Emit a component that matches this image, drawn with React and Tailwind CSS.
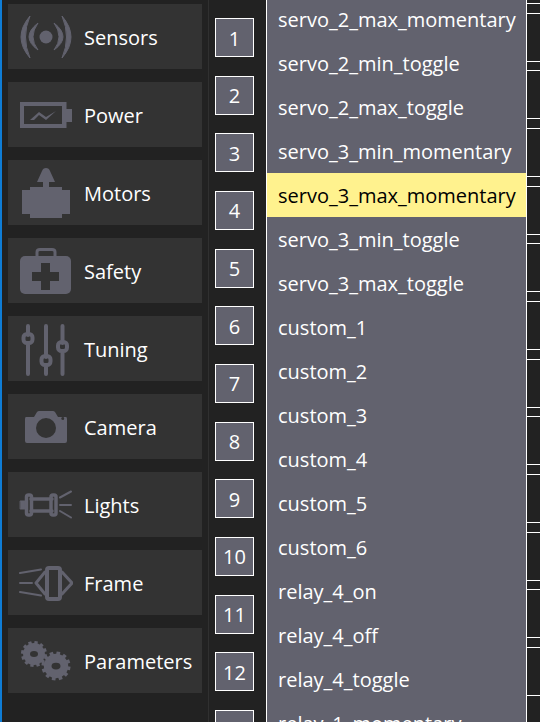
const iconFill = '#62626e';

const SensorsIcon = () => (
  <svg width="54" height="48" viewBox="0 0 54 48" fill={iconFill} stroke={iconFill} strokeLinejoin="round">
    <circle cx="27" cy="24" r="6.5" stroke="none" />
    <path d="M11 3Q-7 24 11 45Q2 24 11 3Z" />
    <path d="M43 3Q61 24 43 45Q52 24 43 3Z" />
    <path d="M19 10Q1 24 19 37Q9 24 19 10Z" />
    <path d="M35 10Q53 24 35 37Q45 24 35 10Z" />
  </svg>
);

const PowerIcon = () => (
  <svg width="54" height="48" viewBox="0 0 54 48" fill="none">
    <path d="M1 11H47.5V18H53V31H47.5V37H1Z" fill={iconFill} />
    <rect x="5" y="15" width="38" height="18" fill="#333333" />
    <path d="M11 29L20 21L27 26L37 20L27 29L20 24L15 29Z" fill={iconFill} />
  </svg>
);

const MotorsIcon = () => (
  <svg width="48" height="50" viewBox="0 0 48 50">
    <path d="M24 0Q21 0 20 3L15 14H21V19H8V22H0V46H8V50H40V46H48V22H40V19H27V14H33L28 3Q27 0 24 0Z" fill={iconFill} />
  </svg>
);

const SafetyIcon = () => (
  <svg width="54" height="50" viewBox="0 0 54 50">
    <path d="M18 12V6Q18 3.500 21 3.500H33Q36 3.500 36 6V12" fill="none" stroke={iconFill} strokeWidth="3" />
    <rect x="1" y="10" width="51" height="38" rx="5" fill={iconFill} />
    <path d="M22 17H31V26H40V35H31V44H22V35H13V26H22Z" fill="#333333" />
  </svg>
);

const TuningIcon = () => (
  <svg width="50" height="56" viewBox="0 0 50 56" fill="none" stroke={iconFill}>
    <path d="M7 5V14M7 24V53M25 5V36M25 46V53M41.500 5V22M41.500 32V53" strokeWidth="4" strokeLinecap="round" />
    <rect x="2.500" y="13" width="9" height="9" rx="3.500" strokeWidth="4" />
    <rect x="20.500" y="35" width="9" height="9" rx="3.500" strokeWidth="4" />
    <rect x="37" y="21" width="9" height="9" rx="3.500" strokeWidth="4" />
  </svg>
);

const CameraIcon = () => (
  <svg width="44" height="34" viewBox="0 0 44 34">
    <path fillRule="evenodd" d="M2 7H10L13 2Q14 1 15 1H29Q30 1 31 2L34 7H42Q43 7 43 9V31Q43 33 41 33H3Q1 33 1 31V9Q1 7 2 7ZM22 8A10 10 0 1 0 22.010 28A10 10 0 1 0 22 8ZM38.700 7A1.500 1.500 0 1 0 38.710 10A1.500 1.500 0 1 0 38.700 7Z" fill={iconFill} />
  </svg>
);

const LightsIcon = () => (
  <svg width="54" height="30" viewBox="0 0 54 30" fill="none" stroke={iconFill} strokeLinecap="round">
    <path d="M1.500 11H6V19H1.500Z" fill={iconFill} strokeWidth="1" />
    <rect x="7.500" y="5" width="5" height="20" rx="2" strokeWidth="3.500" />
    <rect x="32" y="5" width="5" height="20" rx="2" strokeWidth="3.500" />
    <path d="M12 9H33M12 21H33" strokeWidth="3.500" />
    <path d="M41 7.500L52 1.500M41 15H52M41 21L52 27.500" strokeWidth="2" />
  </svg>
);

const FrameIcon = () => (
  <svg width="54" height="36" viewBox="0 0 54 36" fill="none" stroke={iconFill} strokeLinecap="round" strokeLinejoin="round">
    <rect x="28" y="3" width="13" height="31" rx="2" strokeWidth="4" />
    <path d="M26 7L17 18L26 29M43 7L53 18L43 29" strokeWidth="3" />
    <path d="M1 8L22 4.500M1 18H13M1 27L22 30.500" strokeWidth="2" />
  </svg>
);

const gearTeeth = [0, 30, 60, 90, 120, 150];

const Gear = ({ cx, cy, r, hole }) => (
  <g>
    {gearTeeth.map(a => (
      <rect key={a} x={cx - r * 0.13} y={cy - r} width={r * 0.26} height={r * 2} transform={`rotate(${a + 10} ${cx} ${cy})`} fill={iconFill} />
    ))}
    <circle cx={cx} cy={cy} r={r * 0.84} fill={iconFill} />
    <ellipse cx={cx} cy={cy} rx={hole} ry={hole * 0.75} fill="#333333" />
  </g>
);

const ParametersIcon = () => (
  <svg width="54" height="40" viewBox="0 0 54 40">
    <Gear cx={15} cy={13} r={13} hole={4} />
    <Gear cx={37} cy={25} r={14.500} hole={4.500} />
  </svg>
);

const menu = [
  { name: 'Sensors', icon: <SensorsIcon /> },
  { name: 'Power', icon: <PowerIcon /> },
  { name: 'Motors', icon: <MotorsIcon /> },
  { name: 'Safety', icon: <SafetyIcon /> },
  { name: 'Tuning', icon: <TuningIcon /> },
  { name: 'Camera', icon: <CameraIcon /> },
  { name: 'Lights', icon: <LightsIcon /> },
  { name: 'Frame', icon: <FrameIcon /> },
  { name: 'Parameters', icon: <ParametersIcon /> },
];

const options = [
  'servo_2_max_momentary',
  'servo_2_min_toggle',
  'servo_2_max_toggle',
  'servo_3_min_momentary',
  'servo_3_max_momentary',
  'servo_3_min_toggle',
  'servo_3_max_toggle',
  'custom_1',
  'custom_2',
  'custom_3',
  'custom_4',
  'custom_5',
  'custom_6',
  'relay_4_on',
  'relay_4_off',
  'relay_4_toggle',
  'relay_1_momentary',
];

const numbers = [1, 2, 3, 4, 5, 6, 7, 8, 9, 10, 11, 12, 13];
const slots = Array.from({ length: 13 }, (_, i) => i);

export default function App() {
  return (
    <div className="h-[722px] w-[540px] overflow-hidden flex bg-[#222222] font-['Open_Sans','Noto_Sans',sans-serif] text-[20px]">
      <div className="w-[2px] shrink-0 bg-[#0f7dd6]" />

      <div className="w-[194px] ml-[6px] shrink-0 flex flex-col gap-[13px] pt-[4px]">
        {menu.map(item => (
          <div key={item.name} className="h-[65px] shrink-0 flex items-center bg-[#333333] text-white">
            <div className="w-[76px] shrink-0 flex justify-center">{item.icon}</div>
            <span className="pt-[2px]">{item.name}</span>
          </div>
        ))}
      </div>

      <div className="w-px ml-[6px] shrink-0 bg-[#303030]" />

      <div className="w-[39px] ml-[6px] shrink-0 flex flex-col gap-[18.67px] pt-[18px]">
        {numbers.map(n => (
          <div key={n} className="h-[39px] pt-[2px] shrink-0 flex items-center justify-center bg-[#62626e] border border-white text-white">
            {n}
          </div>
        ))}
      </div>

      <div className="w-[261px] ml-[12px] shrink-0 flex flex-col bg-[#62626e] border-x border-white -mt-[3px] text-white">
        {options.map(o => (
          <div key={o} className={o === 'servo_3_max_momentary'
            ? 'h-[44px] pt-[2px] shrink-0 flex items-center pl-[11px] bg-[#fff28e] text-black'
            : 'h-[44px] pt-[2px] shrink-0 flex items-center pl-[11px]'}>
            {o}
          </div>
        ))}
      </div>

      <div className="flex-1 flex flex-col gap-[8.67px] -mt-[45px]">
        {slots.map(i => (
          <div key={i} className="h-[49px] shrink-0 border-y border-white bg-[#222222]" />
        ))}
      </div>
    </div>
  );
}
